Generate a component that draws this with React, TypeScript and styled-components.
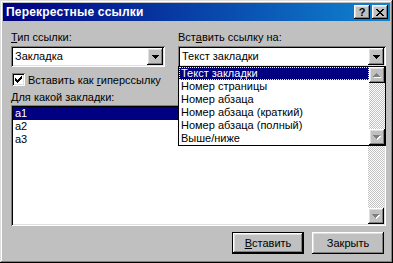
import styled, { createGlobalStyle } from 'styled-components';

const GlobalStyle = createGlobalStyle`
  html, body {
    margin: 0;
    padding: 0;
    background: #c0c0c0;
  }
  body {
    font-family: "Liberation Sans", Arial, sans-serif;
    font-size: 11px;
    color: #000;
  }
`;

const raised = `
  box-shadow: inset -1px -1px #000, inset 1px 1px #fff, inset -2px -2px #808080, inset 2px 2px #dfdfdf;
`;

const sunken = `
  box-shadow: inset 1px 1px #808080, inset -1px -1px #fff, inset 2px 2px #000, inset -2px -2px #dfdfdf;
`;

const Window = styled.div`
  width: 393px;
  height: 263px;
  box-sizing: border-box;
  padding: 3px;
  background: #c0c0c0;
  box-shadow: inset -1px -1px #000, inset 1px 1px #dfdfdf, inset -2px -2px #808080, inset 2px 2px #fff;
  display: flex;
  flex-direction: column;
`;

const TitleBar = styled.div`
  height: 18px;
  padding: 0 2px 0 3px;
  background: linear-gradient(to right, #000080, #1084d0);
  display: flex;
  align-items: center;
  gap: 2px;
`;

const Title = styled.div`
  flex: 1;
  color: #fff;
  font-weight: 700;
  font-size: 12px;
  letter-spacing: 0.2px;
`;

const CaptionButton = styled.div`
  width: 16px;
  height: 14px;
  box-sizing: border-box;
  background: #c0c0c0;
  ${raised}
  display: flex;
  align-items: center;
  justify-content: center;
  font-weight: 700;
  font-size: 11px;
  line-height: 14px;
`;

const Content = styled.div`
  padding: 10px 4px 0 8px;
  display: grid;
  grid-template-columns: 154px 208px;
  column-gap: 13px;
`;

const Cell = styled.div<{ $span?: boolean; $mt?: number }>`
  grid-column: ${(p) => (p.$span ? '1 / -1' : 'auto')};
  margin-top: ${(p) => p.$mt ?? 0}px;
  position: relative;
`;

const Label = styled.div`
  line-height: 13px;
  height: 13px;
  white-space: nowrap;
`;

const Combo = styled.div`
  height: 21px;
  box-sizing: border-box;
  padding: 2px;
  background: #fff;
  ${sunken}
  display: flex;
  align-items: center;
`;

const ComboText = styled.div`
  flex: 1;
  padding-left: 2px;
  line-height: 13px;
`;

const ArrowButton = styled.div<{ $h?: number }>`
  width: 16px;
  height: ${(p) => p.$h ?? 17}px;
  box-sizing: border-box;
  background: #c0c0c0;
  ${raised}
  display: flex;
  align-items: center;
  justify-content: center;
  flex-shrink: 0;
`;

const DropList = styled.div`
  position: absolute;
  top: 20px;
  left: 0;
  width: 208px;
  height: 80px;
  box-sizing: border-box;
  border: 1px solid #000;
  background: #fff;
  display: flex;
  z-index: 2;
`;

const Items = styled.div`
  flex: 1;
  min-width: 0;
`;

const Item = styled.div<{ $selected?: boolean; $focus?: boolean }>`
  height: 13px;
  line-height: 13px;
  padding-left: 2px;
  white-space: nowrap;
  box-sizing: border-box;
  background: ${(p) => (p.$selected ? '#000080' : 'transparent')};
  color: ${(p) => (p.$selected ? '#fff' : '#000')};
  outline: ${(p) => (p.$focus ? '1px dotted #ffff80' : 'none')};
  outline-offset: -1px;
`;

const ScrollBar = styled.div`
  width: 16px;
  display: flex;
  flex-direction: column;
  flex-shrink: 0;
`;

const Track = styled.div`
  flex: 1;
  background: repeating-conic-gradient(#c0c0c0 0 25%, #fff 0 50%) 0 0 / 2px 2px;
`;

const CheckRow = styled.div`
  display: flex;
  align-items: center;
  height: 13px;
  padding-left: 1px;
  gap: 3px;
`;

const CheckBox = styled.div`
  width: 13px;
  height: 13px;
  box-sizing: border-box;
  background: #fff;
  ${sunken}
  display: flex;
  align-items: center;
  justify-content: center;
`;

const ListBox = styled.div`
  height: 121px;
  box-sizing: border-box;
  padding: 2px;
  background: #fff;
  ${sunken}
  display: flex;
`;

const ButtonRow = styled.div`
  display: flex;
  justify-content: flex-end;
  gap: 8px;
  padding-right: 2px;
`;

const PushButton = styled.div<{ $default?: boolean }>`
  width: 72px;
  height: 22px;
  box-sizing: border-box;
  background: #c0c0c0;
  box-shadow: ${(p) =>
    p.$default
      ? 'inset 0 0 0 1px #000, inset -2px -2px #000, inset 2px 2px #fff, inset -3px -3px #808080, inset 3px 3px #dfdfdf'
      : 'inset -1px -1px #000, inset 1px 1px #fff, inset -2px -2px #808080, inset 2px 2px #dfdfdf'};
  display: flex;
  align-items: center;
  justify-content: center;
  line-height: 13px;
`;

const DownGlyph = () => (
  <svg width="7" height="4" viewBox="0 0 7 4" shapeRendering="crispEdges">
    <path d="M0 0H7V1H6V2H5V3H4V4H3V3H2V2H1V1H0Z" fill="#000" />
  </svg>
);

const DisabledArrow = ({ up }: { up?: boolean }) => {
  const d = up ? 'M3 0H4V1H5V2H6V3H7V4H0V3H1V2H2V1H3Z' : 'M0 0H7V1H6V2H5V3H4V4H3V3H2V2H1V1H0Z';
  return (
    <svg width="8" height="5" viewBox="0 0 8 5" shapeRendering="crispEdges">
      <path d={d} fill="#fff" transform="translate(1 1)" />
      <path d={d} fill="#808080" />
    </svg>
  );
};

const CheckMark = () => (
  <svg width="7" height="7" viewBox="0 0 7 7" shapeRendering="crispEdges">
    {[2, 3, 4, 3, 2, 1, 0].map((y, x) => (
      <rect key={x} x={x} y={y} width="1" height="3" fill="#000" />
    ))}
  </svg>
);

const CloseGlyph = () => (
  <svg width="8" height="7" viewBox="0 0 8 7" shapeRendering="crispEdges">
    <path
      d="M0 0H2V1H3V2H5V1H6V0H8V1H7V2H6V3H5V4H6V5H7V6H8V7H6V6H5V5H3V6H2V7H0V6H1V5H2V4H3V3H2V2H1V1H0Z"
      fill="#000"
    />
  </svg>
);

const refTypes = [
  'Текст закладки',
  'Номер страницы',
  'Номер абзаца',
  'Номер абзаца (краткий)',
  'Номер абзаца (полный)',
  'Выше/ниже',
];

const bookmarks = ['a1', 'a2', 'a3'];

export default function App() {
  return (
    <>
      <GlobalStyle />
      <Window>
        <TitleBar>
          <Title>Перекрестные ссылки</Title>
          <CaptionButton>?</CaptionButton>
          <CaptionButton>
            <CloseGlyph />
          </CaptionButton>
        </TitleBar>
        <Content>
          <Cell>
            <Label>
              <u>Т</u>ип ссылки:
            </Label>
          </Cell>
          <Cell>
            <Label>
              Вст<u>а</u>вить ссылку на:
            </Label>
          </Cell>
          <Cell $mt={2}>
            <Combo>
              <ComboText>Закладка</ComboText>
              <ArrowButton>
                <DownGlyph />
              </ArrowButton>
            </Combo>
          </Cell>
          <Cell $mt={2}>
            <Combo>
              <ComboText>Текст закладки</ComboText>
              <ArrowButton>
                <DownGlyph />
              </ArrowButton>
            </Combo>
            <DropList>
              <Items>
                {refTypes.map((t, i) => (
                  <Item key={t} $selected={i === 0} $focus={i === 0}>
                    {t}
                  </Item>
                ))}
              </Items>
              <ScrollBar>
                <ArrowButton $h={16}>
                  <DisabledArrow up />
                </ArrowButton>
                <Track />
                <ArrowButton $h={16}>
                  <DisabledArrow />
                </ArrowButton>
              </ScrollBar>
            </DropList>
          </Cell>
          <Cell $span $mt={6}>
            <CheckRow>
              <CheckBox>
                <CheckMark />
              </CheckBox>
              <span>
                Вставить как <u>г</u>иперссылку
              </span>
            </CheckRow>
          </Cell>
          <Cell $span $mt={5}>
            <Label>
              <u>Д</u>ля какой закладки:
            </Label>
          </Cell>
          <Cell $span $mt={1}>
            <ListBox>
              <Items>
                {bookmarks.map((b, i) => (
                  <Item key={b} $selected={i === 0}>
                    {b}
                  </Item>
                ))}
              </Items>
              <ScrollBar>
                <ArrowButton $h={16}>
                  <DisabledArrow up />
                </ArrowButton>
                <Track />
                <ArrowButton $h={16}>
                  <DisabledArrow />
                </ArrowButton>
              </ScrollBar>
            </ListBox>
          </Cell>
          <Cell $span $mt={6}>
            <ButtonRow>
              <PushButton $default>
                <span>
                  <u>В</u>ставить
                </span>
              </PushButton>
              <PushButton>Закрыть</PushButton>
            </ButtonRow>
          </Cell>
        </Content>
      </Window>
    </>
  );
}
